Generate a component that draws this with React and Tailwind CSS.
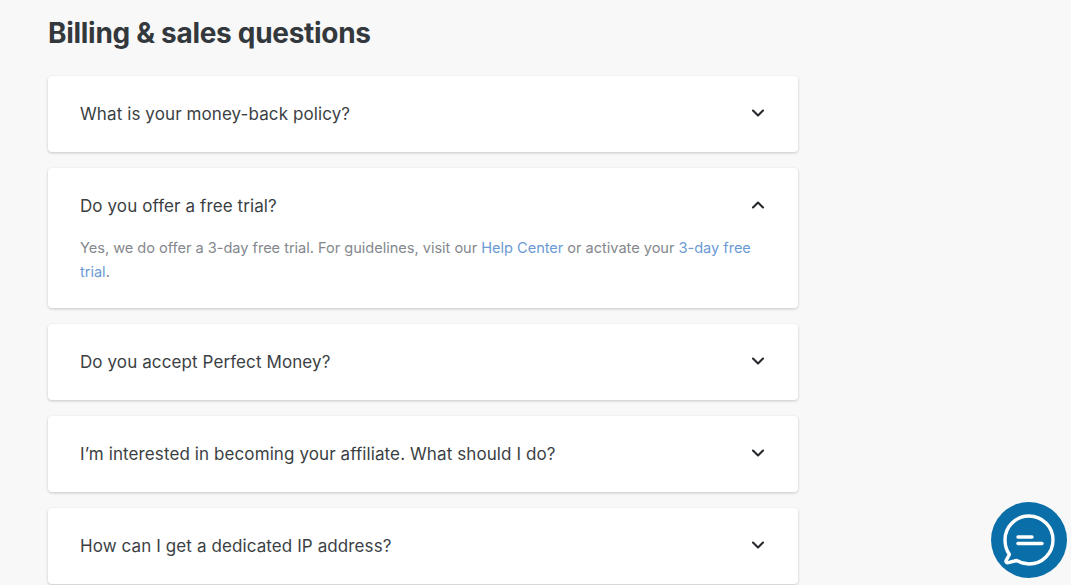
import React from "react";
import { ChevronDown, ChevronUp } from "lucide-react";

const font = "font-['Inter','Noto_Sans',sans-serif]";

const Question = ({ title, open, children }) => (
  <div className="rounded-[4px] bg-white px-8 shadow-[0_1px_3px_rgba(0,0,0,0.2)]">
    <div className="flex h-[76px] items-center justify-between">
      <h3 className="text-[17px] leading-6 font-normal tracking-[0.1px] text-[#3b3f44]">{title}</h3>
      <div className="mr-[-2px] mt-[-2px] text-[#24282c]">
        {open ? <ChevronUp size={20} strokeWidth={2.5} /> : <ChevronDown size={20} strokeWidth={2.5} />}
      </div>
    </div>
    {children}
  </div>
);

export default function App() {
  return (
    <div className={`relative h-[585px] overflow-hidden bg-[#f8f8f8] pl-12 ${font}`}>
      <div className="w-[750px]">
        <h2 className="pt-[14px] pb-[24px] text-[28px] leading-[38px] font-bold tracking-[-0.3px] text-[#33383d]">
          Billing &amp; sales questions
        </h2>
        <div className="flex flex-col gap-4">
          <Question title="What is your money-back policy?" />
          <Question title="Do you offer a free trial?" open>
            <p className="mt-[-8px] pb-[24px] text-[14.6px] leading-6 tracking-[-0.03px] text-[#84888d]">
              Yes, we do offer a 3-day free trial. For guidelines, visit our{" "}
              <a className="text-[#6a9ad4]">Help Center</a> or activate your{" "}
              <a className="text-[#6a9ad4]">3-day free trial</a>.
            </p>
          </Question>
          <Question title="Do you accept Perfect Money?" />
          <Question title="I’m interested in becoming your affiliate. What should I do?" />
          <Question title="How can I get a dedicated IP address?" />
        </div>
      </div>

      {/* Chat button */}
      <button className="absolute right-[4px] bottom-[7px] flex h-[76px] w-[76px] items-center justify-center rounded-full bg-[#0a6ea8]">
        <svg width="52" height="52" viewBox="0 0 52 52" fill="none" stroke="white" strokeLinecap="round" strokeLinejoin="round">
          <path
            d="M26 2C39.3 2 50 12.700 50 26S39.300 50 26 50c-4.600 0-8.800-1.300-12.400-3.500l-8.400 2.200c-1.600.4-2.800-1-2-2.400l3.200-5.800C3.600 36.500 2 31.500 2 26 2 12.700 12.700 2 26 2Z"
            strokeWidth="3.4"
          />
          <path d="M15 23h14" strokeWidth="3.4" />
          <path d="M15 29.500h24" strokeWidth="3.4" />
        </svg>
      </button>
    </div>
  );
}
